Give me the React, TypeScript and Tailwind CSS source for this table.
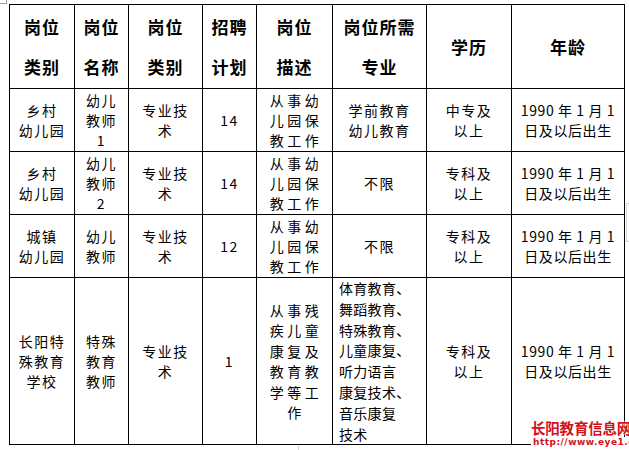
import React from "react";

const COLS = "grid-cols-[65px_54px_74px_54px_76px_94px_85px_113px]";

const HEAD: string[][] = [
  ["岗位", "类别"],
  ["岗位", "名称"],
  ["岗位", "类别"],
  ["招聘", "计划"],
  ["岗位", "描述"],
  ["岗位所需", "专业"],
  ["学历"],
  ["年龄"],
];

const BIRTH = ["1990 年 1 月 1", "日及以后出生"];

const ROWS: string[][][] = [
  [
    ["乡村", "幼儿园"],
    ["幼儿", "教师", "1"],
    ["专业技", "术"],
    ["14"],
    ["从事幼", "儿园保", "教工作"],
    ["学前教育", "幼儿教育"],
    ["中专及", "以上"],
    BIRTH,
  ],
  [
    ["乡村", "幼儿园"],
    ["幼儿", "教师", "2"],
    ["专业技", "术"],
    ["14"],
    ["从事幼", "儿园保", "教工作"],
    ["不限"],
    ["专科及", "以上"],
    BIRTH,
  ],
  [
    ["城镇", "幼儿园"],
    ["幼儿", "教师"],
    ["专业技", "术"],
    ["12"],
    ["从事幼", "儿园保", "教工作"],
    ["不限"],
    ["专科及", "以上"],
    BIRTH,
  ],
];

const SPECIAL = [
  ["长阳特", "殊教育", "学校"],
  ["特殊", "教育", "教师"],
  ["专业技", "术"],
  ["1"],
  ["从事残", "疾儿童", "康复及", "教育教", "学等工", "作"],
  ["体育教育、", "舞蹈教育、", "特殊教育、", "儿童康复、", "听力语言", "康复技术、", "音乐康复", "技术"],
  ["专科及", "以上"],
  BIRTH,
];

const cell = "border-r border-b border-black flex flex-col items-center justify-center text-center";

// tracking per body column: describe column is spread wider, birth date tighter
function trackFor(col: number) {
  if (col === 4) return "tracking-[3.5px] pl-[3px]";
  if (col === 7) return "tracking-[0.6px]";
  return "tracking-[1.5px]";
}

function Lines({ lines, track }: { lines: string[]; track: string }) {
  return (
    <>
      {lines.map((l, i) => (
        <div key={i} className={`whitespace-pre ${track}`}>
          {l}
        </div>
      ))}
    </>
  );
}

export default function App() {
  return (
    <div
      className="relative w-[629px] h-[450px] bg-white overflow-hidden text-black"
      style={{ fontFamily: '"Noto Sans CJK SC", "Noto Sans", sans-serif' }}
    >
      {/* page corner marks */}
      <div className="absolute left-0 top-[3px] w-[6px] h-px bg-gray-400" />
      <div className="absolute left-[6px] top-0 w-px h-[4px] bg-gray-400" />
      <div className="absolute left-[626px] top-[203px] w-px h-[39px] bg-gray-300" />
      <div className="absolute left-[626px] top-[203px] w-[3px] h-px bg-gray-300" />
      <div className="absolute left-[626px] top-[241px] w-[3px] h-px bg-gray-300" />
      <div className="absolute left-[298px] top-[446px] w-px h-[4px] bg-gray-300" />

      <div className="absolute left-[9px] top-[4px] w-[616px] border-l border-t border-black">
        {/* header */}
        <div className={`grid ${COLS} h-[84px]`}>
          {HEAD.map((lines, i) => (
            <div key={i} className={`${cell} text-[17px] font-bold leading-[40px]`}>
              <Lines lines={lines} track="tracking-[1px]" />
            </div>
          ))}
        </div>

        {ROWS.map((row, r) => (
          <div key={r} className={`grid ${COLS} h-[63px]`}>
            {row.map((lines, i) => (
              <div key={i} className={`${cell} text-[14px] leading-[20px]`}>
                <Lines lines={lines} track={trackFor(i)} />
              </div>
            ))}
          </div>
        ))}

        <div className={`grid ${COLS} h-[167px]`}>
          {SPECIAL.map((lines, i) =>
            i === 5 ? (
              <div
                key={i}
                className="border-r border-b border-black flex flex-col justify-center pl-[6px] text-[14px] leading-[20.8px]"
              >
                <Lines lines={lines} track="tracking-[0.3px]" />
              </div>
            ) : (
              <div key={i} className={`${cell} text-[14px] leading-[20.4px]`}>
                <Lines lines={lines} track={trackFor(i)} />
              </div>
            )
          )}
        </div>
      </div>

      {/* watermark */}
      <div className="absolute left-[531px] top-[418px] flex flex-col items-start">
        <div
          className="text-[14.5px] font-bold leading-[20px] text-[#d4101c] whitespace-nowrap tracking-[-0.2px]"
          style={{ textShadow: "0 0 2px #fff, 0 0 2px #fff" }}
        >
          长阳教育信息网
        </div>
        <div
          className="mt-[-1px] text-[9px] font-bold leading-[11px] text-[#d4101c] bg-white whitespace-nowrap pl-[2px] pr-[3px] tracking-[0.5px]"
          style={{ fontFamily: '"DejaVu Sans", sans-serif' }}
        >
          http://www.eye1.com
        </div>
      </div>
    </div>
  );
}
